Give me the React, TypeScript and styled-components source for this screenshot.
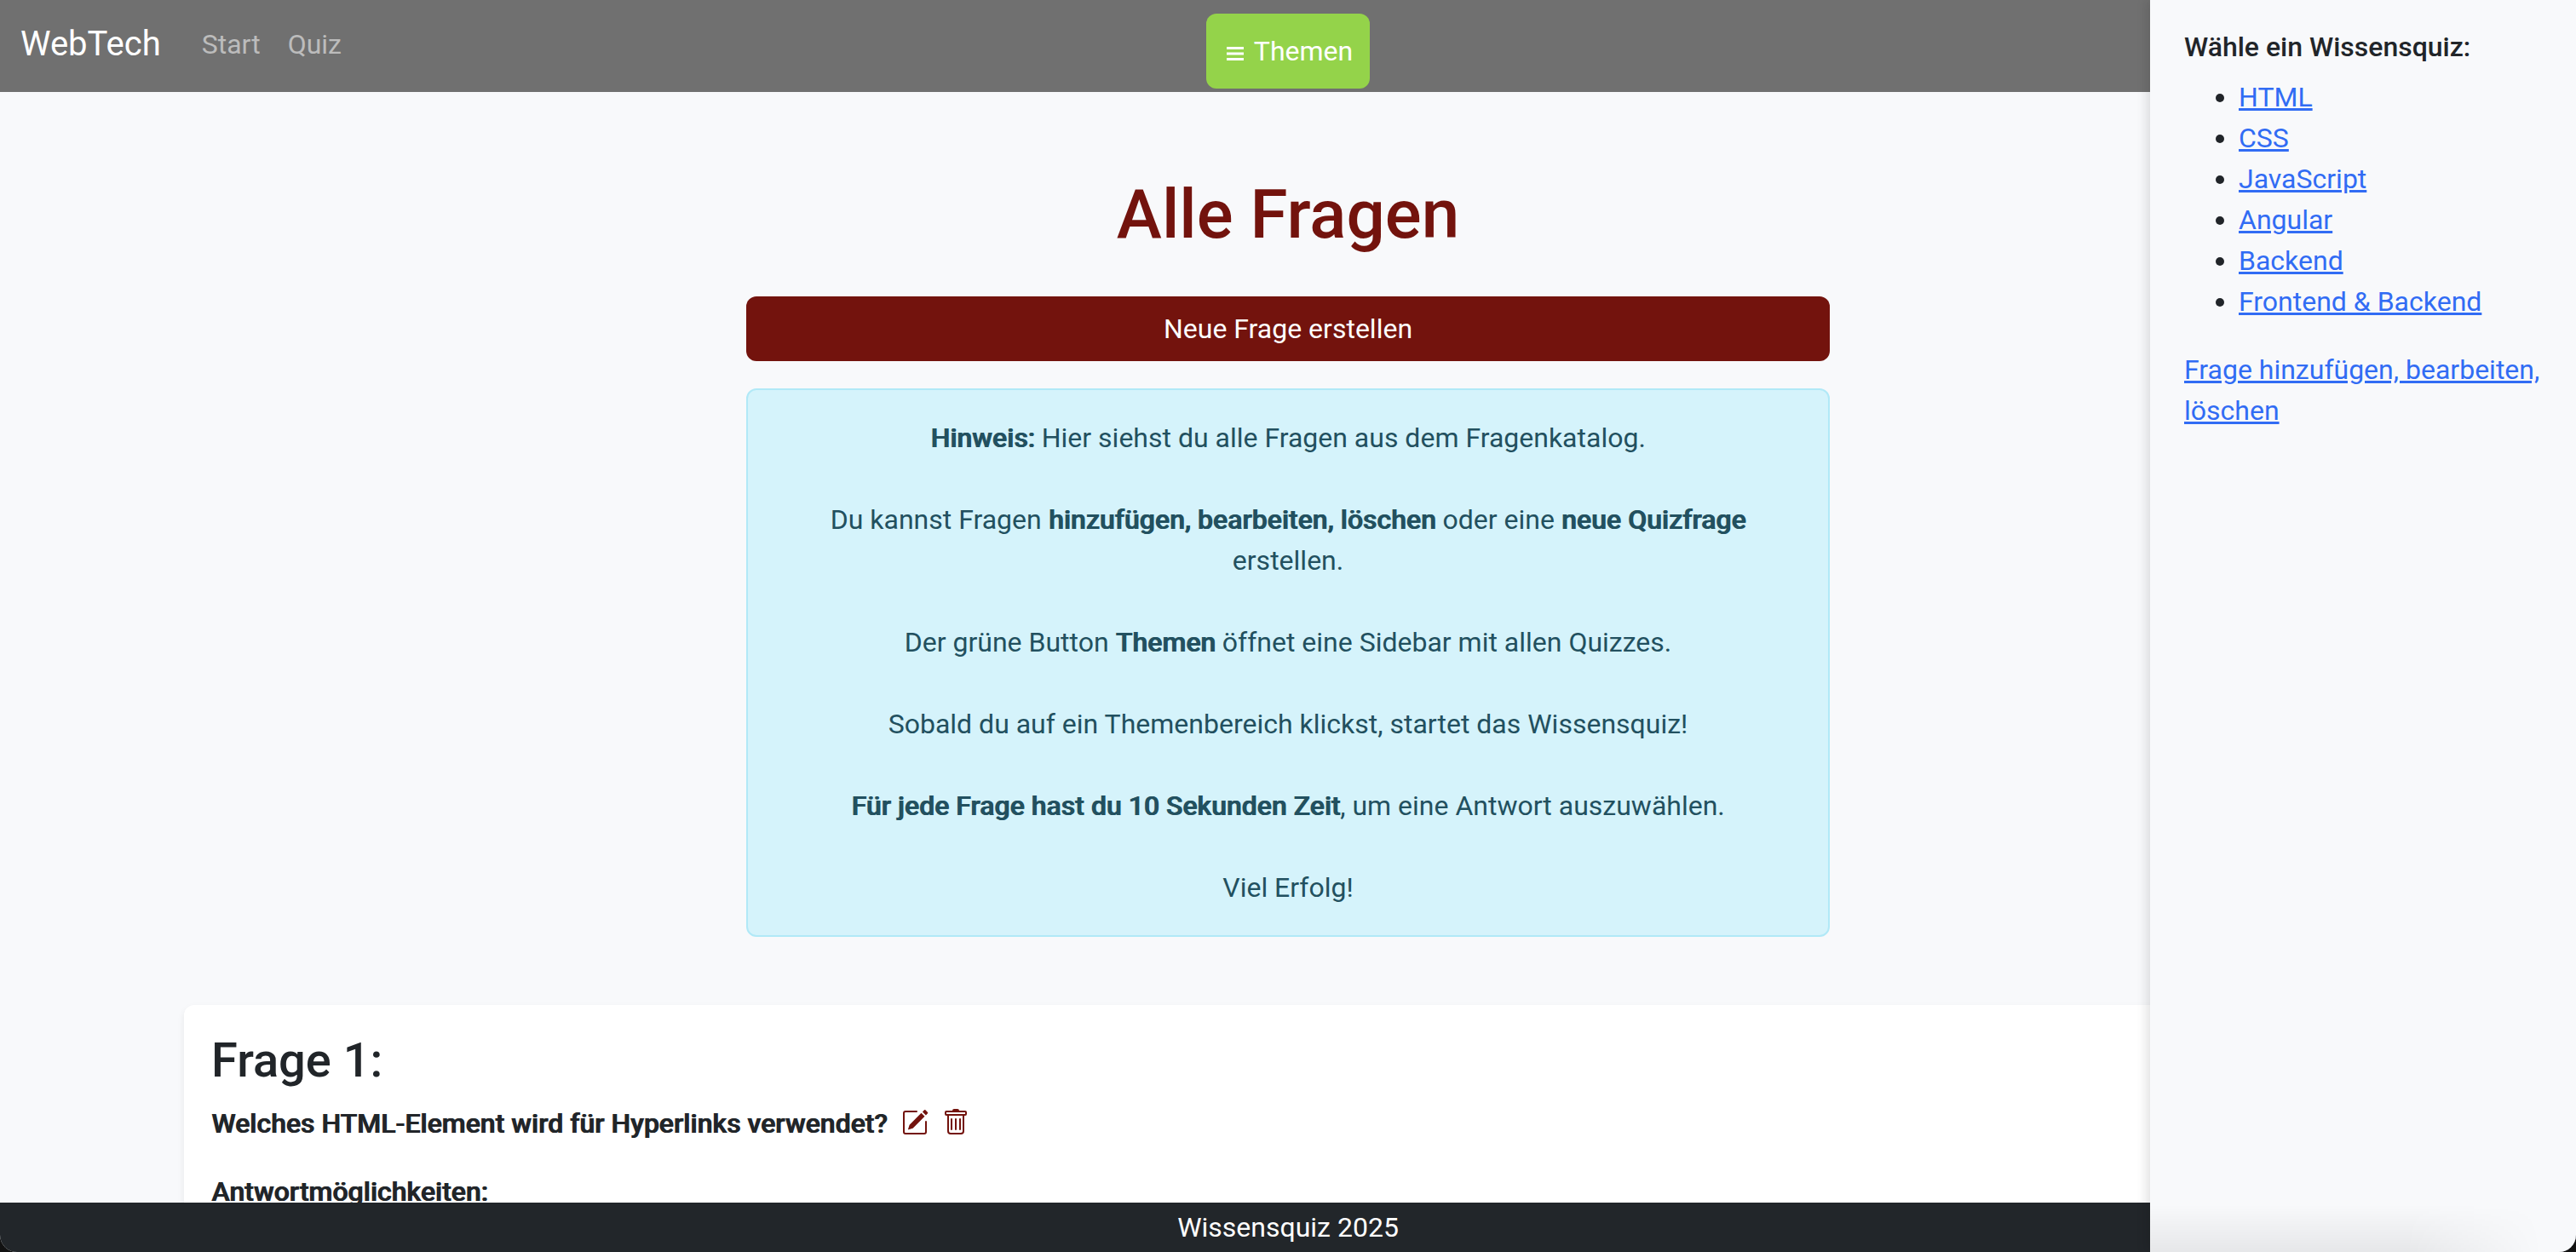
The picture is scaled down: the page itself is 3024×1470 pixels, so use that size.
import React from "react";
import styled, { createGlobalStyle } from "styled-components";
import { BsPencilSquare, BsTrash } from "react-icons/bs";

const GlobalStyle = createGlobalStyle`
  *, *::before, *::after { box-sizing: border-box; }
  body {
    margin: 0;
    background: #121212;
    color: #212529;
    font: 400 32px/48px Roboto, sans-serif;
  }
  h1, h2, h3, p, ul { margin: 0; }
  strong {
    font-weight: 500;
    text-shadow: 1px 0 currentColor;
  }
`;

const Shell = styled.div`
  position: relative;
  display: flex;
  flex-direction: column;
  height: 100vh;
  overflow: hidden;
  background: #f8f9fb;
  border-radius: 0 0 20px 20px;
`;

const Navbar = styled.header`
  display: grid;
  grid-template-columns: 1fr auto 1fr;
  align-items: start;
  flex: none;
  padding: 16px 24px 4px;
  background: #707070;
`;

const NavLinks = styled.nav`
  display: flex;
  align-items: center;
  gap: 32px;
  padding-top: 6px;
`;

const Brand = styled.a`
  margin-right: 16px;
  color: #fff;
  font-size: 40px;
  line-height: 60px;
  text-decoration: none;
`;

const NavLink = styled.a`
  color: #bcbcbc;
  text-decoration: none;
`;

const TopicsButton = styled.button`
  display: flex;
  align-items: center;
  gap: 12px;
  padding: 20px 20px 20px 24px;
  border: 0;
  border-radius: 12px;
  background: #94d34a;
  color: #fff;
  font: inherit;
`;

const MenuIcon = styled.svg`
  width: 20px;
  height: 18px;
  margin-top: 6px;
`;

const Content = styled.main`
  flex: 1;
  min-height: 0;
  overflow: hidden;
  padding-top: 96px;
`;

const Intro = styled.section`
  display: flex;
  flex-direction: column;
  gap: 32px;
  width: 100%;
  max-width: 1272px;
  margin: 0 auto 80px;
  text-align: center;
`;

const Title = styled.h1`
  margin-bottom: 16px;
  color: #73130d;
  font-size: 80px;
  font-weight: 500;
  line-height: 96px;
`;

const CreateButton = styled.button`
  padding: 14px 24px;
  border: 0;
  border-radius: 12px;
  background: #73130d;
  color: #fff;
  font: inherit;
`;

const Hint = styled.div`
  display: flex;
  flex-direction: column;
  gap: 48px;
  padding: 32px;
  border: 2px solid #b1e9f7;
  border-radius: 12px;
  background: #d5f3fb;
  color: #22505f;
`;

const Questions = styled.section`
  max-width: 2640px;
  margin: 0 auto;
  padding: 0 24px;
`;

const Card = styled.article`
  padding: 32px;
  border-radius: 12px;
  background: #fff;
  box-shadow: 0 4px 8px rgba(0, 0, 0, 0.075);
`;

const CardTitle = styled.h2`
  margin-bottom: 16px;
  font-size: 56px;
  font-weight: 500;
  line-height: 67px;
`;

const QuestionRow = styled.div`
  display: flex;
  align-items: center;
  gap: 16px;
  margin-bottom: 32px;
`;

const IconButton = styled.button`
  display: flex;
  padding: 0 0 2px;
  border: 0;
  background: none;
  color: #73130d;
  font-size: 32px;
`;

const Footer = styled.footer`
  flex: none;
  padding: 5px 24px;
  background: #22262a;
  color: #fff;
  text-align: center;
`;

const Sidebar = styled.aside`
  position: absolute;
  inset: 0 0 0 auto;
  width: 500px;
  padding: 36px 40px;
  background: #f8f9fb;
  box-shadow: -4px 0 12px rgba(0, 0, 0, 0.12);

  &::after {
    content: "";
    position: absolute;
    inset: auto 0 0 0;
    height: 56px;
    background: linear-gradient(to top, rgba(0, 0, 0, 0.07), transparent);
    mask-image: linear-gradient(to right, #000 60%, transparent 92%);
    pointer-events: none;
  }
`;

const SidebarTitle = styled.h3`
  margin-bottom: 16px;
  font-size: 32px;
  font-weight: 500;
  line-height: 38px;
`;

const TopicList = styled.ul`
  margin-bottom: 32px;
  padding-left: 64px;
`;

const TextLink = styled.a`
  color: #316cf4;
  text-decoration: underline;
`;

const topics = ["HTML", "CSS", "JavaScript", "Angular", "Backend", "Frontend & Backend"];

export default function App() {
  return (
    <>
      <GlobalStyle />
      <Shell>
        <Navbar>
          <NavLinks>
            <Brand href="#">WebTech</Brand>
            <NavLink href="#start">Start</NavLink>
            <NavLink href="#quiz">Quiz</NavLink>
          </NavLinks>
          <TopicsButton type="button">
            <MenuIcon viewBox="0 0 20 18" aria-hidden="true">
              <path d="M0 2.5h20M0 9h20M0 15.5h20" stroke="currentColor" strokeWidth="3" />
            </MenuIcon>
            Themen
          </TopicsButton>
        </Navbar>

        <Content>
          <Intro>
            <Title>Alle Fragen</Title>
            <CreateButton type="button">Neue Frage erstellen</CreateButton>
            <Hint>
              <p><strong>Hinweis:</strong> Hier siehst du alle Fragen aus dem Fragenkatalog.</p>
              <p>
                Du kannst Fragen <strong>hinzufügen, bearbeiten, löschen</strong> oder eine{" "}
                <strong>neue Quizfrage</strong> erstellen.
              </p>
              <p>Der grüne Button <strong>Themen</strong> öffnet eine Sidebar mit allen Quizzes.</p>
              <p>Sobald du auf ein Themenbereich klickst, startet das Wissensquiz!</p>
              <p><strong>Für jede Frage hast du 10 Sekunden Zeit</strong>, um eine Antwort auszuwählen.</p>
              <p>Viel Erfolg!</p>
            </Hint>
          </Intro>

          <Questions>
            <Card>
              <CardTitle>Frage 1:</CardTitle>
              <QuestionRow>
                <strong>Welches HTML-Element wird für Hyperlinks verwendet?</strong>
                <IconButton type="button" aria-label="Frage bearbeiten"><BsPencilSquare /></IconButton>
                <IconButton type="button" aria-label="Frage löschen"><BsTrash /></IconButton>
              </QuestionRow>
              <p><strong>Antwortmöglichkeiten:</strong></p>
            </Card>
          </Questions>
        </Content>

        <Footer>Wissensquiz 2025</Footer>

        <Sidebar>
          <SidebarTitle>Wähle ein Wissensquiz:</SidebarTitle>
          <TopicList>
            {topics.map((topic) => (
              <li key={topic}><TextLink href="#quiz">{topic}</TextLink></li>
            ))}
          </TopicList>
          <TextLink href="#fragen">Frage hinzufügen, bearbeiten, löschen</TextLink>
        </Sidebar>
      </Shell>
    </>
  );
}
